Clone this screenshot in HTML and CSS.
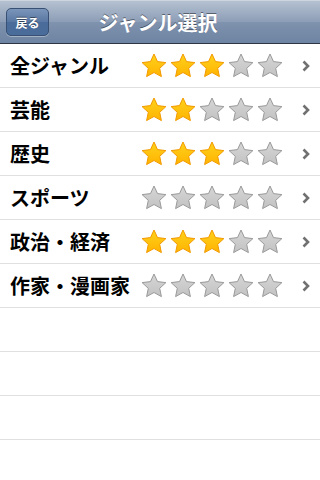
FILE: index.html
```html
<!DOCTYPE html>
<html lang="ja">
<head>
  <meta charset="UTF-8">
  <meta name="viewport" content="width=device-width, initial-scale=1.0">
  <title>ジャンル選択</title>
  <link rel="stylesheet" href="styles.css">
</head>
<body>
  <div class="navbar">
    <div class="back-btn">戻る</div>
    <div class="nav-title">ジャンル選択</div>
  </div>
  <div class="list" id="list"></div>
  <svg width="0" height="0" style="position:absolute">
    <defs>
      <linearGradient id="gold" x1="0" y1="0" x2="0" y2="1">
        <stop offset="0" stop-color="#ffd21c"/>
        <stop offset="1" stop-color="#ffb300"/>
      </linearGradient>
      <linearGradient id="grey" x1="0" y1="0" x2="0" y2="1">
        <stop offset="0" stop-color="#d6d6d6"/>
        <stop offset="1" stop-color="#c2c2c2"/>
      </linearGradient>
    </defs>
  </svg>
  <script>
    // --- Data ---
    const GENRES = [
      ['全ジャンル', 3],
      ['芸能', 2],
      ['歴史', 3],
      ['スポーツ', 0],
      ['政治・経済', 3],
      ['作家・漫画家', 0]
    ];
    const EMPTY_ROWS = 4;
    const STAR = 'M13 1 L16.5 8.6 L24.9 9.6 L18.7 15.3 L20.4 23.6 L13 19.5 L5.6 23.6 L7.3 15.3 L1.1 9.6 L9.5 8.6 Z';
    // --- DOM ---
    const list = document.getElementById('list');
    function starSvg(on) {
      const fill = on ? 'url(#gold)' : 'url(#grey)';
      const stroke = on ? '#f29a00' : '#9a9a9a';
      return `<svg class="star" viewBox="0 0 26 26"><path d="${STAR}" fill="${fill}" stroke="${stroke}" stroke-width="1" stroke-linejoin="round"/></svg>`;
    }
    function render() {
      GENRES.forEach(([name, rating]) => {
        const row = document.createElement('div');
        row.className = 'row';
        let stars = '';
        for (let i = 0; i < 5; i++) stars += starSvg(i < rating);
        row.innerHTML = `<span class="name">${name}</span><span class="stars">${stars}</span>` +
          `<svg class="chevron" viewBox="0 0 8 12"><path d="M1.5 1.5 L6 6 L1.5 10.5" fill="none" stroke="#717171" stroke-width="2.6"/></svg>`;
        list.appendChild(row);
      });
      for (let i = 0; i < EMPTY_ROWS; i++) {
        const row = document.createElement('div');
        row.className = 'row';
        list.appendChild(row);
      }
    }
    render();
  </script>
</body>
</html>
```

FILE: styles.css
```css
html, body {
  margin: 0;
  padding: 0;
  background: #fff;
  font-family: 'Noto Sans CJK JP', 'Liberation Sans', sans-serif;
}
.navbar {
  height: 44px;
  display: flex;
  align-items: center;
  justify-content: center;
  position: relative;
  background: linear-gradient(#b5c1d1 0%, #8c9db6 50%, #7f92ae 51%, #6d84a2 100%);
  border-top: 1px solid #cdd5df;
  border-bottom: 1px solid #2d3642;
  box-sizing: border-box;
}
.back-btn {
  position: absolute;
  left: 6px;
  top: 7px;
  width: 43px;
  height: 28px;
  box-sizing: border-box;
  border: 1px solid #375073;
  border-radius: 5px;
  background: linear-gradient(#7b95b9 0%, #5877a2 50%, #4a6c9b 51%, #4a6c9b 100%);
  box-shadow: 0 1px 0 rgba(255,255,255,0.35);
  color: #fff;
  font-size: 12px;
  font-weight: bold;
  display: flex;
  align-items: center;
  justify-content: center;
  text-shadow: 0 -1px 0 rgba(0,0,0,0.45);
}
.nav-title {
  color: #fff;
  font-size: 20px;
  font-weight: bold;
  margin-left: -4px;
  text-shadow: 0 -1px 0 rgba(0,0,0,0.45);
}
.row {
  height: 44px;
  box-sizing: border-box;
  border-bottom: 1px solid #e0e0e0;
  display: flex;
  align-items: center;
  padding: 0 0 0 10px;
}
.name {
  width: 130px;
  font-size: 20px;
  font-weight: bold;
  color: #000;
  white-space: nowrap;
  margin-top: -1px;
}
.stars {
  display: flex;
  gap: 3px;
  margin-left: 1px;
}
.star {
  width: 26px;
  height: 26px;
}
.chevron {
  width: 8px;
  height: 12px;
  margin-left: 19px;
}
```
